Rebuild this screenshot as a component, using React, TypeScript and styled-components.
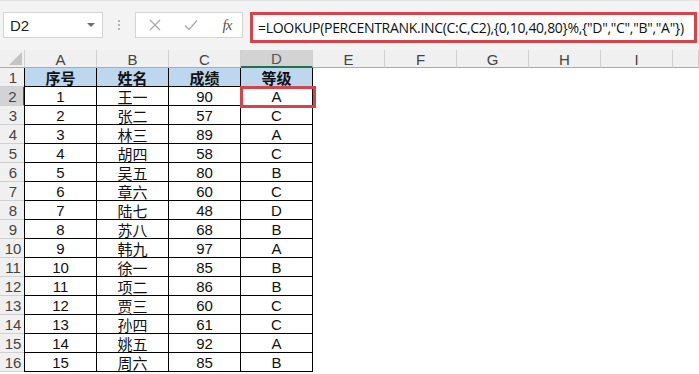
import React from 'react';
import styled, { createGlobalStyle } from 'styled-components';

const GlobalStyle = createGlobalStyle`
	html, body {
		margin: 0;
		padding: 0;
		background: #ffffff;
	}
	body {
		font-family: 'Liberation Sans', Arial, sans-serif;
	}
`;

const COLUMNS = ['A', 'B', 'C', 'D', 'E', 'F', 'G', 'H', 'I', ''];
const HEADERS = ['序号', '姓名', '成绩', '等级'];
const ROWS: [string, string, string, string][] = [
	['1', '王一', '90', 'A'],
	['2', '张二', '57', 'C'],
	['3', '林三', '89', 'A'],
	['4', '胡四', '58', 'C'],
	['5', '吴五', '80', 'B'],
	['6', '章六', '60', 'C'],
	['7', '陆七', '48', 'D'],
	['8', '苏八', '68', 'B'],
	['9', '韩九', '97', 'A'],
	['10', '徐一', '85', 'B'],
	['11', '项二', '86', 'B'],
	['12', '贾三', '60', 'C'],
	['13', '孙四', '61', 'C'],
	['14', '姚五', '92', 'A'],
	['15', '周六', '85', 'B']
];
const FORMULA = '=LOOKUP(PERCENTRANK.INC(C:C,C2),{0,10,40,80}%,{"D","C","B","A"})';

const Page = styled.div`
	width: 699px;
	height: 374px;
	overflow: hidden;
	background: #ffffff;
`;

const Toolbar = styled.div`
	height: 50px;
	box-sizing: border-box;
	background: #f3f3f3;
	border-top: 1px solid #e2e2e2;
	display: flex;
	align-items: flex-start;
	padding: 11px 2px 0 3px;
`;

const NameBox = styled.div`
	width: 100px;
	height: 26px;
	box-sizing: border-box;
	background: #ffffff;
	border: 1px solid #d4d4d4;
	display: flex;
	align-items: center;
	justify-content: space-between;
	padding: 0 7px 0 6px;
	font-size: 15px;
	color: #222;
`;

const Caret = styled.span`
	width: 0;
	height: 0;
	border-left: 4px solid transparent;
	border-right: 4px solid transparent;
	border-top: 4px solid #6d6d6d;
`;

const Dots = styled.div`
	width: 32px;
	height: 26px;
	display: flex;
	flex-direction: column;
	align-items: center;
	justify-content: center;
	gap: 2px;
	span {
		width: 2px;
		height: 2px;
		background: #b4b4b4;
	}
`;

const ButtonBox = styled.div`
	width: 108px;
	height: 26px;
	box-sizing: border-box;
	background: #ffffff;
	border: 1px solid #d4d4d4;
	display: flex;
	align-items: center;
	padding-left: 10px;
	gap: 19px;
`;

const IconButton = styled.span`
	width: 17px;
	display: flex;
	align-items: center;
	justify-content: center;
`;

const Fx = styled.span`
	font-family: 'Liberation Serif', 'Times New Roman', serif;
	font-style: italic;
	font-size: 15px;
	color: #555;
	letter-spacing: -1px;
	margin-left: 1px;
`;

const FormulaBox = styled.div`
	margin-left: 7px;
	flex: 1;
	height: 31px;
	box-sizing: border-box;
	background: #ffffff;
	border: 3px solid #d5444a;
	display: flex;
	align-items: center;
	padding-left: 5px;
	font-family: 'Open Sans', 'Liberation Sans', sans-serif;
	font-size: 14px;
	letter-spacing: -0.3px;
	color: #111;
	white-space: nowrap;
	overflow: hidden;
`;

const Grid = styled.div`
	display: grid;
	grid-template-columns: 25px repeat(9, 72px) 26px;
	grid-template-rows: 18px repeat(16, 19px);
	position: relative;
`;

const Corner = styled.div`
	background: #f0f0f0;
	border-bottom: 1px solid #ababab;
	border-right: 1px solid #d0d0d0;
	box-sizing: border-box;
	display: flex;
	align-items: flex-end;
	justify-content: flex-end;
	padding: 0 2px 2px 0;
`;

const Triangle = styled.span`
	width: 0;
	height: 0;
	border-left: 13px solid transparent;
	border-bottom: 13px solid #c4c4c4;
`;

const ColHeader = styled.div<{ $active?: boolean }>`
	box-sizing: border-box;
	background: ${p => (p.$active ? '#d3d3d3' : '#f0f0f0')};
	border-right: 1px solid #d0d0d0;
	border-bottom: ${p => (p.$active ? '2px solid #217346' : '1px solid #ababab')};
	display: flex;
	align-items: center;
	justify-content: center;
	font-size: 15px;
	color: ${p => (p.$active ? '#555' : '#444')};
	line-height: 1;
	padding-top: 1px;
`;

const RowHeader = styled.div<{ $active?: boolean }>`
	box-sizing: border-box;
	background: ${p => (p.$active ? '#d3d3d3' : '#f0f0f0')};
	border-bottom: 1px solid #d0d0d0;
	border-right: ${p => (p.$active ? '2px solid #217346' : '1px solid #ababab')};
	display: flex;
	align-items: center;
	justify-content: center;
	font-size: 15px;
	color: #444;
	padding-left: 2px;
`;

const Cell = styled.div<{ $table?: boolean; $head?: boolean; $first?: boolean; $cjk?: boolean }>`
	box-sizing: border-box;
	background: ${p => (p.$head ? '#bdd7ee' : '#ffffff')};
	border-right: ${p => (p.$table ? '1px solid #000' : 'none')};
	border-bottom: ${p => (p.$table ? '1px solid #000' : 'none')};
	border-left: ${p => (p.$first ? '1px solid #000' : 'none')};
	margin-left: ${p => (p.$first ? '-1px' : '0')};
	display: flex;
	align-items: center;
	justify-content: center;
	font-family: ${p => (p.$cjk ? "'Noto Sans CJK SC', sans-serif" : "'Liberation Sans', Arial, sans-serif")};
	font-size: 15px;
	font-weight: ${p => (p.$head ? 700 : 400)};
	color: #111;
	line-height: 1;
`;

const Highlight = styled.div`
	position: absolute;
	left: 240px;
	top: 36px;
	width: 76px;
	height: 22px;
	box-sizing: border-box;
	border: 3px solid #d5444a;
	pointer-events: none;
`;

const CrossIcon = () => (
	<svg width='12' height='12' viewBox='0 0 12 12'>
		<path d='M1 1 L11 11 M11 1 L1 11' stroke='#a9a9a9' strokeWidth='1.3' fill='none' />
	</svg>
);

const CheckIcon = () => (
	<svg width='14' height='12' viewBox='0 0 14 12'>
		<path d='M1 6.5 L5 10.5 L13 1.5' stroke='#a9a9a9' strokeWidth='1.3' fill='none' />
	</svg>
);

const App = () => {
	return (
		<Page>
			<GlobalStyle />
			<Toolbar>
				<NameBox>
					<span>D2</span>
					<Caret />
				</NameBox>
				<Dots>
					<span />
					<span />
					<span />
				</Dots>
				<ButtonBox>
					<IconButton><CrossIcon /></IconButton>
					<IconButton><CheckIcon /></IconButton>
					<IconButton><Fx>fx</Fx></IconButton>
				</ButtonBox>
				<FormulaBox>{FORMULA}</FormulaBox>
			</Toolbar>
			<Grid>
				<Corner><Triangle /></Corner>
				{COLUMNS.map((c, i) => (
					<ColHeader key={`c${i}`} $active={c === 'D'}>{c}</ColHeader>
				))}
				<RowHeader>1</RowHeader>
				{HEADERS.map((h, i) => (
					<Cell key={`h${i}`} $table $head $cjk $first={i === 0}>{h}</Cell>
				))}
				{COLUMNS.slice(4).map((_, i) => <Cell key={`he${i}`} />)}
				{ROWS.map((row, r) => (
					<React.Fragment key={`r${r}`}>
						<RowHeader $active={r === 0}>{r + 2}</RowHeader>
						{row.map((v, i) => (
							<Cell key={`v${i}`} $table $cjk={i === 1} $first={i === 0}>{v}</Cell>
						))}
						{COLUMNS.slice(4).map((_, i) => <Cell key={`e${i}`} />)}
					</React.Fragment>
				))}
				<Highlight />
			</Grid>
		</Page>
	);
};

export default App;
